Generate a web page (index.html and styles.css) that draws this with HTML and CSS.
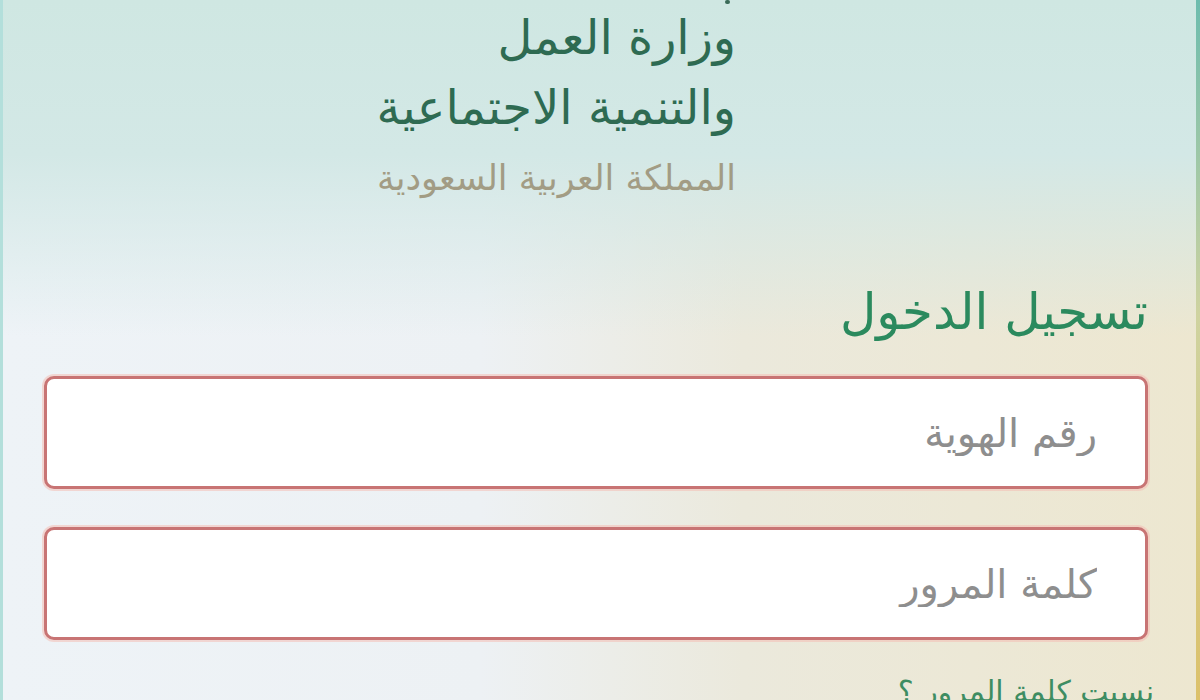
FILE: index.html
```html
<!DOCTYPE html>
<html lang="ar" dir="rtl">
<head>
    <meta charset="UTF-8">
    <meta name="viewport" content="width=device-width, initial-scale=1.0">
    <title>تسجيل الدخول</title>
    <link rel="stylesheet" href="styles.css">
</head>
<body>
    <div class="frame">
        <div class="brand">
            <span class="brand-dot"></span>
            <div class="brand-name">وزارة العمل</div>
            <div class="brand-name">والتنمية الاجتماعية</div>
            <div class="brand-country">المملكة العربية السعودية</div>
        </div>

        <form class="login-form" onsubmit="return false;">
            <h1 class="login-title">تسجيل الدخول</h1>
            <input type="text" class="field" placeholder="رقم الهوية">
            <input type="password" class="field" placeholder="كلمة المرور">
            <a href="#" class="forgot-link">نسيت كلمة المرور ؟</a>
        </form>
    </div>
</body>
</html>
```

FILE: styles.css
```css
body {
    margin: 0;
    height: 700px;
    overflow: hidden;
    font-family: "DejaVu Sans", sans-serif;
    background:
        linear-gradient(to bottom, #cfe7e2 0%, #d3e8e6 22%, rgba(226, 236, 232, 0) 48%),
        linear-gradient(to right, #eef3f7 0%, #edf1f4 40%, #ebe9dc 62%, #ede7d0 100%);
}

.frame {
    height: 700px;
    box-sizing: border-box;
    padding: 0 48px 0 44px;
    border-right: 4px solid transparent;
    border-image: linear-gradient(to bottom, #6dbcae, #cfd3a0 45%, #dcc16a) 1;
    border-image-slice: 0 1 0 0;
    box-shadow: inset 3px 0 0 #b3dfdb;
}

/* ministry wordmark */
.brand {
    position: relative;
    margin-right: 412px;
    padding-top: 2px;
    text-align: right;
}

.brand-dot {
    position: absolute;
    top: 0;
    right: 6px;
    width: 5px;
    height: 4px;
    background: #3a6b58;
    border-radius: 2px;
}

.brand-name {
    font-size: 48px;
    line-height: 70px;
    color: #2e6b52;
    letter-spacing: 1px;
}

.brand-country {
    margin-top: 14px;
    font-size: 35px;
    line-height: 44px;
    color: #a29c84;
}

/* login box */
.login-form {
    margin-top: 80px;
}

.login-title {
    margin: 0 0 32px;
    font-size: 50px;
    font-weight: normal;
    line-height: 64px;
    color: #2b8a5e;
}

.field {
    display: block;
    width: 100%;
    height: 113px;
    box-sizing: border-box;
    margin-bottom: 38px;
    padding: 0 48px;
    border: 3px solid #c87474;
    border-radius: 10px;
    box-shadow: 0 0 0 2px rgba(244, 190, 180, 0.55);
    background: #fff;
    font-family: "DejaVu Sans", sans-serif;
    font-size: 40px;
    color: #555;
    direction: rtl;
    outline: none;
}

.field::placeholder {
    color: #8e8e8e;
}

.forgot-link {
    display: block;
    margin: -6px -6px 0 0;
    font-size: 30px;
    line-height: 40px;
    color: #3e8d62;
    text-decoration: none;
}
```
